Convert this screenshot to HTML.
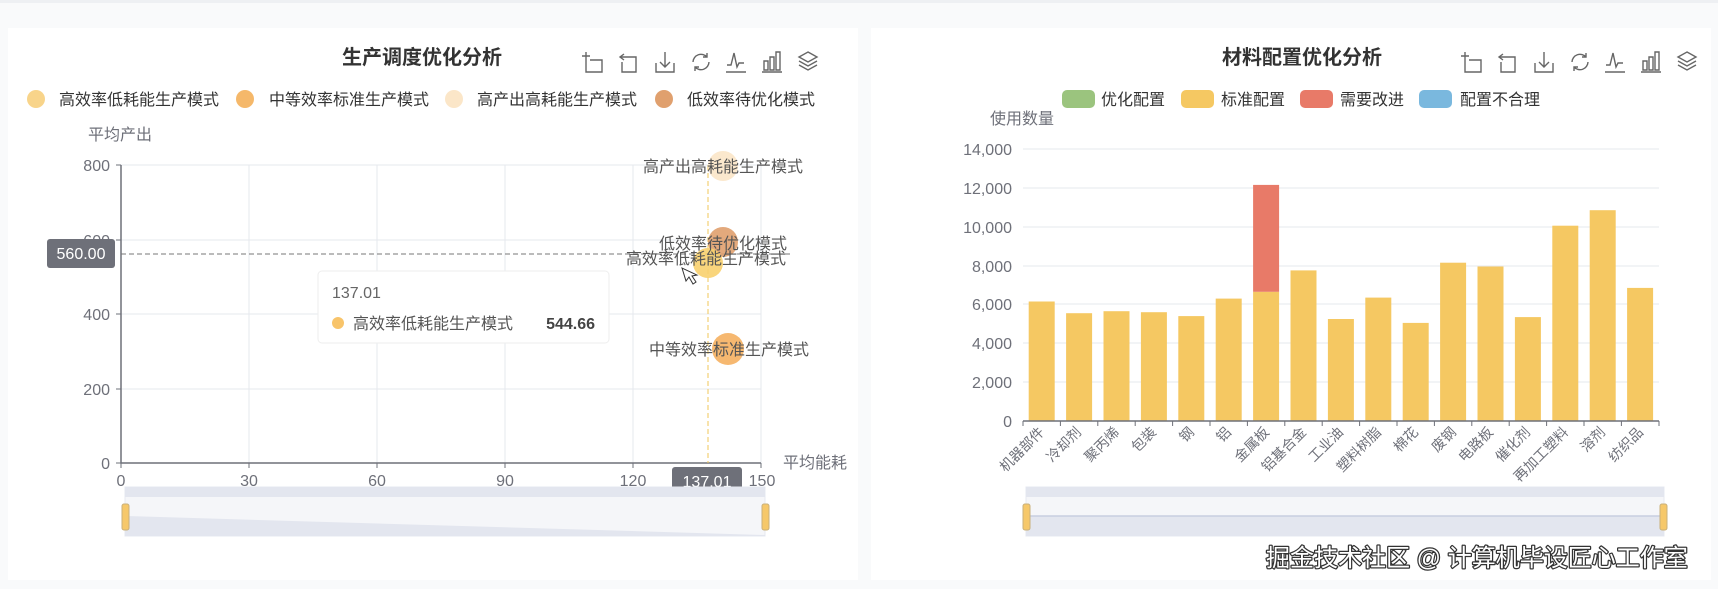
<!DOCTYPE html>
<html><head><meta charset="utf-8"><style>
html,body{margin:0;padding:0;background:#fafbfc;}
svg{display:block;font-family:"Liberation Sans","Noto Sans CJK SC",sans-serif;}
</style></head><body>
<svg width="1718" height="589" viewBox="0 0 1718 589" xmlns="http://www.w3.org/2000/svg">
<rect x="0" y="0" width="1718" height="589" fill="#f9fafb"/>
<rect x="0" y="0" width="1718" height="3" fill="#eef0f3"/>
<rect x="8" y="28" width="850" height="552" fill="#ffffff"/>
<rect x="871" y="28" width="840" height="552" fill="#ffffff"/>

<defs>
<g id="tb" fill="none" stroke="#666" stroke-width="1.4">
 <g transform="translate(0,0)"><path d="M4 1v8M0 5h8M4 9h0M8 9h12v12H4V9"/></g>
 <g transform="translate(36,0)"><path d="M6 3L2 6l4 3M2 6h16v15H4V11"/></g>
 <g transform="translate(72,0)"><path d="M2 12v9h18v-9M11 1v15M6 11l5 5 5-5"/></g>
 <g transform="translate(108,0)"><path d="M3 11a8 8 0 0 1 14-5M19 11a8 8 0 0 1-14 5M17 2v4h-4M5 20v-4h4"/></g>
 <g transform="translate(144,0)"><path d="M0 21h20M1 14h4l3-12 3 14 2-4h5"/></g>
 <g transform="translate(180,0)"><path d="M0 21h20M2 10h4v9H2zM8 6h4v13H8zM14 1h4v18h-4z"/></g>
 <g transform="translate(216,0)"><path d="M10 1l9 5-9 5-9-5zM1 10l9 5 9-5M1 14l9 5 9-5"/></g>
</g>
</defs>

<!-- LEFT CHART -->
<text x="422" y="64" text-anchor="middle" font-size="20" font-weight="bold" fill="#333">生产调度优化分析</text>
<use href="#tb" x="582" y="51"/>

<g font-size="16" fill="#333">
<circle cx="36" cy="99" r="9" fill="#f8d48a"/><text x="59" y="105">高效率低耗能生产模式</text>
<circle cx="245" cy="99" r="9" fill="#f5b86a"/><text x="269" y="105">中等效率标准生产模式</text>
<circle cx="454" cy="99" r="9" fill="#fbe6c8"/><text x="477" y="105">高产出高耗能生产模式</text>
<circle cx="664" cy="99" r="9" fill="#e0a06e"/><text x="687" y="105">低效率待优化模式</text>
</g>
<text x="88" y="140" font-size="16" fill="#6e7079">平均产出</text>

<g stroke="#e6e8ee" stroke-width="1">
<path d="M249 165V463M377 165V463M505 165V463M633 165V463M761 165V463"/>
<path d="M121 165H761M121 240H761M121 314H761M121 389H761"/>
</g>
<path d="M121 165V463H761" stroke="#6e7079" stroke-width="1.5" fill="none"/>
<path d="M116 165h5M116 240h5M116 314h5M116 389h5M116 463h5M121 463v5M249 463v5M377 463v5M505 463v5M633 463v5M761 463v5" stroke="#6e7079"/>
<g font-size="16" fill="#6e7079" text-anchor="end">
<text x="110" y="171">800</text><text x="110" y="246">600</text><text x="110" y="320">400</text><text x="110" y="395">200</text><text x="110" y="469">0</text>
</g>
<g font-size="16" fill="#6e7079" text-anchor="middle">
<text x="121" y="486">0</text><text x="249" y="486">30</text><text x="377" y="486">60</text><text x="505" y="486">90</text><text x="633" y="486">120</text><text x="762" y="486">150</text>
</g>
<text x="783" y="468" font-size="16" fill="#6e7079">平均能耗</text>

<path d="M121 254H790" stroke="#777" stroke-dasharray="5,3"/>
<path d="M708 165V463" stroke="#f2c75a" stroke-dasharray="5,3"/>

<circle cx="723" cy="166" r="15" fill="#fbe6c8" opacity="0.9"/>
<circle cx="723" cy="242" r="15" fill="#e0a06e" opacity="0.9"/>
<circle cx="708" cy="263" r="15" fill="#f8d06e" opacity="0.9"/>
<circle cx="728" cy="349" r="16" fill="#f5b060" opacity="0.9"/>
<g font-size="16" fill="#555" text-anchor="middle">
<text x="723" y="172">高产出高耗能生产模式</text>
<text x="723" y="249">低效率待优化模式</text>
<text x="706" y="264">高效率低耗能生产模式</text>
<text x="729" y="355">中等效率标准生产模式</text>
</g>
<path d="M682 268l4 13 3-4 4 7 3-2-4-6 5-1z" fill="#fff" stroke="#333" stroke-width="1"/>

<rect x="47" y="239" width="68" height="29" rx="3" fill="#6e7079"/>
<text x="81" y="259" font-size="16" fill="#fff" text-anchor="middle">560.00</text>

<rect x="318" y="271" width="291" height="72" rx="4" fill="#fff" stroke="#eee"/>
<text x="332" y="298" font-size="16" fill="#666">137.01</text>
<circle cx="338" cy="323" r="6" fill="#f8c46a"/>
<text x="353" y="329" font-size="16" fill="#555">高效率低耗能生产模式</text>
<text x="595" y="329" font-size="16" font-weight="bold" fill="#444" text-anchor="end">544.66</text>

<rect x="672" y="467" width="70" height="29" rx="3" fill="#6e7079"/>
<text x="707" y="487" font-size="16" fill="#fff" text-anchor="middle">137.01</text>

<rect x="125" y="487" width="640" height="49" fill="#f5f6f9" stroke="#e6e8f0"/>
<rect x="125" y="487" width="640" height="10" fill="#e3e6ef"/>
<path d="M125 516L765 535V536H125z" fill="#e3e6ef"/>
<rect x="122" y="504" width="7" height="26" rx="2" fill="#f6c86a" stroke="#c9b07a"/>
<rect x="762" y="504" width="7" height="26" rx="2" fill="#f6c86a" stroke="#c9b07a"/>

<!-- RIGHT CHART -->
<text x="1302" y="64" text-anchor="middle" font-size="20" font-weight="bold" fill="#333">材料配置优化分析</text>
<use href="#tb" x="1461" y="51"/>
<g font-size="16" fill="#333">
<rect x="1062" y="90" width="33" height="18" rx="5" fill="#9bc47e"/><text x="1101" y="105">优化配置</text>
<rect x="1181" y="90" width="33" height="18" rx="5" fill="#f5c862"/><text x="1221" y="105">标准配置</text>
<rect x="1300" y="90" width="33" height="18" rx="5" fill="#e87a68"/><text x="1340" y="105">需要改进</text>
<rect x="1419" y="90" width="33" height="18" rx="5" fill="#7ab8de"/><text x="1460" y="105">配置不合理</text>
</g>
<text x="990" y="124" font-size="16" fill="#6e7079">使用数量</text>
<g stroke="#e6e8ee"><path d="M1023 149H1659M1023 188H1659M1023 227H1659M1023 266H1659M1023 304H1659M1023 343H1659M1023 382H1659"/></g>
<g font-size="16" fill="#6e7079" text-anchor="end">
<text x="1012" y="155">14,000</text><text x="1012" y="194">12,000</text><text x="1012" y="233">10,000</text><text x="1012" y="272">8,000</text><text x="1012" y="310">6,000</text><text x="1012" y="349">4,000</text><text x="1012" y="388">2,000</text><text x="1012" y="427">0</text>
</g>
<g fill="#f5c862">
<rect x="1028.7" y="301.5" width="26" height="119.5"/>
<rect x="1066.1" y="313.2" width="26" height="107.8"/>
<rect x="1103.5" y="311.2" width="26" height="109.8"/>
<rect x="1140.9" y="312.2" width="26" height="108.8"/>
<rect x="1178.3" y="316.1" width="26" height="104.9"/>
<rect x="1215.7" y="298.6" width="26" height="122.4"/>
<rect x="1253.1" y="291.8" width="26" height="129.2"/>
<rect x="1290.5" y="270.4" width="26" height="150.6"/>
<rect x="1327.9" y="319" width="26" height="102"/>
<rect x="1365.3" y="297.6" width="26" height="123.4"/>
<rect x="1402.7" y="322.9" width="26" height="98.1"/>
<rect x="1440.1" y="262.7" width="26" height="158.3"/>
<rect x="1477.5" y="266.5" width="26" height="154.5"/>
<rect x="1514.9" y="317.1" width="26" height="103.9"/>
<rect x="1552.3" y="225.7" width="26" height="195.3"/>
<rect x="1589.7" y="210.2" width="26" height="210.8"/>
<rect x="1627.1" y="287.9" width="26" height="133.1"/>
</g>
<rect x="1253.1" y="184.9" width="26" height="106.9" fill="#e87a68"/>
<path d="M1023 421H1659" stroke="#6e7079" stroke-width="1.5"/>
<path d="M1023 421v5M1060.4 421v5M1097.8 421v5M1135.2 421v5M1172.6 421v5M1210 421v5M1247.4 421v5M1284.8 421v5M1322.2 421v5M1359.6 421v5M1397 421v5M1434.4 421v5M1471.8 421v5M1509.2 421v5M1546.6 421v5M1584 421v5M1621.4 421v5M1659 421v5" stroke="#6e7079"/>
<g font-size="14" fill="#6e7079" text-anchor="end">
<text transform="translate(1045,433) rotate(-45)">机器部件</text>
<text transform="translate(1082,433) rotate(-45)">冷却剂</text>
<text transform="translate(1120,433) rotate(-45)">聚丙烯</text>
<text transform="translate(1157,433) rotate(-45)">包装</text>
<text transform="translate(1195,433) rotate(-45)">钢</text>
<text transform="translate(1232,433) rotate(-45)">铝</text>
<text transform="translate(1270,433) rotate(-45)">金属板</text>
<text transform="translate(1307,433) rotate(-45)">铝基合金</text>
<text transform="translate(1344,433) rotate(-45)">工业油</text>
<text transform="translate(1382,433) rotate(-45)">塑料树脂</text>
<text transform="translate(1419,433) rotate(-45)">棉花</text>
<text transform="translate(1457,433) rotate(-45)">废钢</text>
<text transform="translate(1494,433) rotate(-45)">电路板</text>
<text transform="translate(1531,433) rotate(-45)">催化剂</text>
<text transform="translate(1569,433) rotate(-45)">再加工塑料</text>
<text transform="translate(1606,433) rotate(-45)">溶剂</text>
<text transform="translate(1644,433) rotate(-45)">纺织品</text>
</g>

<rect x="1026" y="487" width="638" height="49" fill="#f5f6f9" stroke="#e6e8f0"/>
<rect x="1026" y="487" width="638" height="10" fill="#e3e6ef"/>
<rect x="1026" y="516" width="638" height="20" fill="#e3e6ef"/>
<path d="M1026 516H1664" stroke="#c8cde0" stroke-width="1.5"/>
<rect x="1023" y="504" width="7" height="26" rx="2" fill="#f6c86a" stroke="#c9b07a"/>
<rect x="1660" y="504" width="7" height="26" rx="2" fill="#f6c86a" stroke="#c9b07a"/>

<text x="1266" y="566" font-size="24" fill="#fff" stroke="#333" stroke-width="2.5" paint-order="stroke" stroke-linejoin="round">掘金技术社区 @ 计算机毕设匠心工作室</text>
</svg>
</body></html>
